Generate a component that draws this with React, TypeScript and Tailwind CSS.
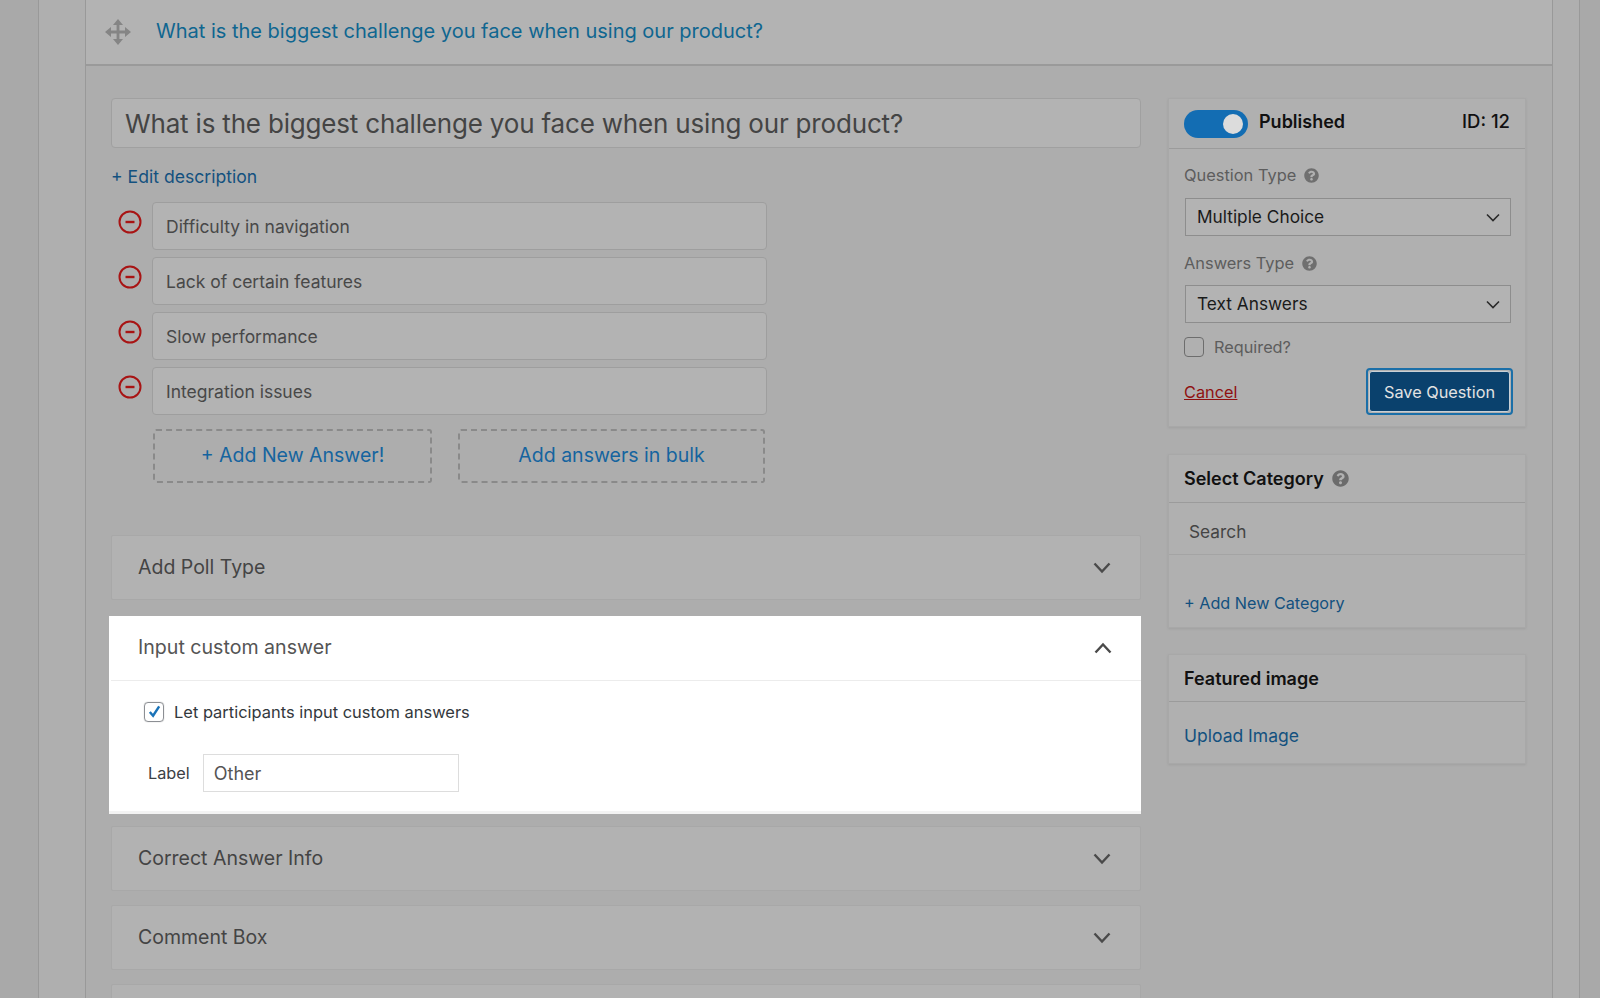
import { FaQuestionCircle } from 'react-icons/fa';

const ANSWERS = ['Difficulty in navigation', 'Lack of certain features', 'Slow performance', 'Integration issues'];

function MoveIcon() {
  return (
    <svg viewBox="0 0 26 26" className="mt-[2px] w-[26px] h-[26px] text-[#858585]" fill="currentColor">
      <path d="M13 0l5 6h-3.6v5.6H20V8l6 5-6 5v-3.6h-5.6V20H18l-5 6-5-6h3.6v-5.6H6V18l-6-5 6-5v3.6h5.6V6H8z" />
    </svg>
  );
}

function MinusIcon() {
  return (
    <svg viewBox="0 0 24 24" className="w-[24px] h-[24px] text-[#a81414]" fill="none" stroke="currentColor" strokeWidth="2">
      <circle cx="12" cy="12" r="10.5" />
      <path d="M7.5 12h9" strokeWidth="2.4" />
    </svg>
  );
}

function Chevron({ up = false }: { up?: boolean }) {
  return (
    <svg viewBox="0 0 18 12" className="w-[18px] h-[12px] text-[#4a4a4a]" fill="none" stroke="currentColor" strokeWidth="2.4">
      <path d={up ? 'M1.5 10.5L9 2.5l7.5 8' : 'M1.5 1.5L9 9.5l7.5-8'} />
    </svg>
  );
}

function SelectBox({ value }: { value: string }) {
  return (
    <div className="ml-px w-[326px] h-[38px] border border-[#8d8d8d] bg-[#b3b3b3] flex items-center justify-between pl-[11px] pr-[10px] text-[17.3px] text-[#1a1a1a]">
      <span>{value}</span>
      <svg viewBox="0 0 14 9" className="w-[14px] h-[9px] text-[#2a2a2a]" fill="none" stroke="currentColor" strokeWidth="1.6">
        <path d="M1 1.5l6 6 6-6" />
      </svg>
    </div>
  );
}

function FieldLabel({ text }: { text: string }) {
  return (
    <div className="flex items-center gap-[8px] h-[24px] text-[16.4px] text-[#5d5d5d]">
      <span>{text}</span>
      <FaQuestionCircle className="w-[15px] h-[15px] text-[#6f6f6f]" />
    </div>
  );
}

function PollSection({ title }: { title: string }) {
  return (
    <div className="h-[65px] rounded-[2px] border border-[#a8a8a8] bg-[#b2b2b2] flex items-center justify-between pl-[26px] pr-[29px] text-[19.5px] text-[#444444]">
      <span>{title}</span>
      <Chevron />
    </div>
  );
}

export default function App() {
  return (
    <div className="h-[998px] overflow-hidden bg-[#a9a9a9] pl-[38px] pr-[20px] font-['Inter',sans-serif]">
      <div className="h-full border-x border-[#999999] bg-[#afafaf] pl-[46px] pr-[26px]">
        <div className="h-full border-x border-[#999999] bg-[#adadad]">
          <div className="h-[66px] pb-[2px] border-b-2 border-[#9a9a9a] bg-[#b3b3b3] flex items-center pl-[19px]">
            <MoveIcon />
            <span className="ml-[25px] text-[20px] text-[#0f6690]">What is the biggest challenge you face when using our product?</span>
          </div>

          <div className="flex gap-[27px] pl-[25px] pt-[32px]">
            <div className="w-[1030px] shrink-0">
              <input
                readOnly
                value="What is the biggest challenge you face when using our product?"
                className="w-full h-[50px] rounded-[4px] border border-[#a0a0a0] bg-[#b3b3b3] px-[13px] text-[26px] tracking-[-0.18px] text-[#444444] outline-none"
              />
              <div className="mt-[17px] h-[24px] leading-[24px] text-[17.6px] text-[#13517f]">+ Edit description</div>

              <div className="mt-[13px] flex flex-col gap-[7px]">
                {ANSWERS.map((answer) => (
                  <div key={answer} className="flex items-start">
                    <div className="w-[41px] pl-[7px] pt-[8px] shrink-0">
                      <MinusIcon />
                    </div>
                    <input
                      readOnly
                      value={answer}
                      className="w-[615px] h-[48px] rounded-[4px] border border-[#9e9e9e] bg-[#b3b3b3] px-[13px] text-[17.5px] text-[#484848] outline-none"
                    />
                  </div>
                ))}
              </div>

              <div className="mt-[14px] ml-[42px] flex gap-[26px]">
                <div className="w-[279px] h-[54px] rounded-[3px] border-2 border-dashed border-[#8a8a8a] flex items-center justify-center text-[19.5px] text-[#15649f]">
                  + Add New Answer!
                </div>
                <div className="w-[307px] h-[54px] rounded-[3px] border-2 border-dashed border-[#8a8a8a] flex items-center justify-center text-[19.5px] text-[#15649f]">
                  Add answers in bulk
                </div>
              </div>

              <div className="mt-[52px]">
                <PollSection title="Add Poll Type" />
              </div>

              <div className="mt-[16px] -ml-[2px] h-[198px] bg-white border-b-[3px] border-[#f3f3f3]">
                <div className="h-[65px] border-b border-[#ececec] ml-[2px] flex items-center justify-between pl-[27px] pr-[29px] text-[19.6px] text-[#555555]">
                  <span>Input custom answer</span>
                  <Chevron up />
                </div>
                <div className="flex items-center pl-[35px] pt-[20px] h-[41px]">
                  <div className="w-[20px] h-[20px] rounded-[4px] border border-[#8c8f94] flex items-center justify-center shadow-[0_0_1px_#999]">
                    <svg viewBox="0 0 16 16" className="w-[15px] h-[15px] text-[#1a73b8]" fill="none" stroke="currentColor" strokeWidth="2.6">
                      <path d="M3 8.5l3.5 4L13 2.5" />
                    </svg>
                  </div>
                  <span className="ml-[10px] mt-[2px] text-[16.45px] text-[#33383c]">Let participants input custom answers</span>
                </div>
                <div className="mt-[32px] flex items-center pl-[39px]">
                  <span className="text-[16.3px] text-[#3c4044]">Label</span>
                  <input
                    readOnly
                    value="Other"
                    className="ml-[13px] w-[256px] h-[38px] border border-[#dddddd] bg-white px-[10px] text-[18px] text-[#555555] outline-none"
                  />
                </div>
              </div>

              <div className="mt-[12px]">
                <PollSection title="Correct Answer Info" />
              </div>
              <div className="mt-[14px]">
                <PollSection title="Comment Box" />
              </div>
              <div className="mt-[14px] h-[65px] rounded-[2px] border border-[#a8a8a8] bg-[#b2b2b2]" />
            </div>

            <div className="w-[358px] shrink-0">
              <div className="h-[329px] bg-[#b0b0b0] border border-[#a8a8a8] shadow-[0_1px_2px_#a0a0a0]">
                <div className="h-[50px] border-b border-[#9b9b9b] flex items-center pl-[15px] pr-[15px]">
                  <div className="w-[64px] h-[28px] rounded-full bg-[#136db3] flex items-center justify-end pr-[5px]">
                    <div className="w-[20px] h-[20px] rounded-full bg-[#dcdcdc]" />
                  </div>
                  <span className="ml-[11px] -mt-[4px] text-[18px] font-semibold text-[#111111]">Published</span>
                  <span className="ml-auto -mt-[4px] text-[18.5px] font-medium text-[#111111]">ID: 12</span>
                </div>
                <div className="pl-[15px] pt-[14px]">
                  <FieldLabel text="Question Type" />
                  <div className="mt-[11px]"><SelectBox value="Multiple Choice" /></div>
                  <div className="mt-[15px]"><FieldLabel text="Answers Type" /></div>
                  <div className="mt-[10px]"><SelectBox value="Text Answers" /></div>
                  <div className="mt-[12px] flex items-center">
                    <div className="w-[20px] h-[20px] rounded-[4px] border border-[#6d6d6d]" />
                    <span className="ml-[10px] text-[16.3px] text-[#5d5d5d]">Required?</span>
                  </div>
                  <div className="mt-[9px] flex items-center justify-between pr-[12px]">
                    <a className="text-[16.3px] text-[#8f1010] underline">Cancel</a>
                    <div className="w-[147px] h-[47px] rounded-[4px] border-2 border-[#1b6fa8] p-px">
                      <div className="w-full h-full rounded-[3px] bg-[#0a416d] border border-[#c8d0d6] flex items-center justify-center text-[16.3px] text-[#e3e3e3]">
                        Save Question
                      </div>
                    </div>
                  </div>
                </div>
              </div>

              <div className="mt-[27px] h-[174px] bg-[#b0b0b0] border border-[#a8a8a8] shadow-[0_1px_2px_#a0a0a0]">
                <div className="h-[48px] border-b border-[#9b9b9b] flex items-center pl-[15px] text-[18px] font-semibold text-[#111111]">
                  <span>Select Category</span>
                  <FaQuestionCircle className="ml-[8px] w-[17px] h-[17px] text-[#6b6b6b]" />
                </div>
                <div className="h-[52px] pt-[6px] border-b border-[#a4a4a4] flex items-center pl-[20px] text-[17.3px] text-[#444444]">Search</div>
                <div className="mt-[36px] pl-[15px] text-[16.2px] text-[#13517f]">+ Add New Category</div>
              </div>

              <div className="mt-[26px] h-[110px] bg-[#b0b0b0] border border-[#a8a8a8] shadow-[0_1px_2px_#a0a0a0]">
                <div className="h-[47px] border-b border-[#9b9b9b] flex items-center pl-[15px] text-[18px] font-semibold text-[#111111]">
                  Featured image
                </div>
                <div className="mt-[21px] pl-[15px] text-[17.5px] text-[#13517f]">Upload Image</div>
              </div>
            </div>
          </div>
        </div>
      </div>
    </div>
  );
}
